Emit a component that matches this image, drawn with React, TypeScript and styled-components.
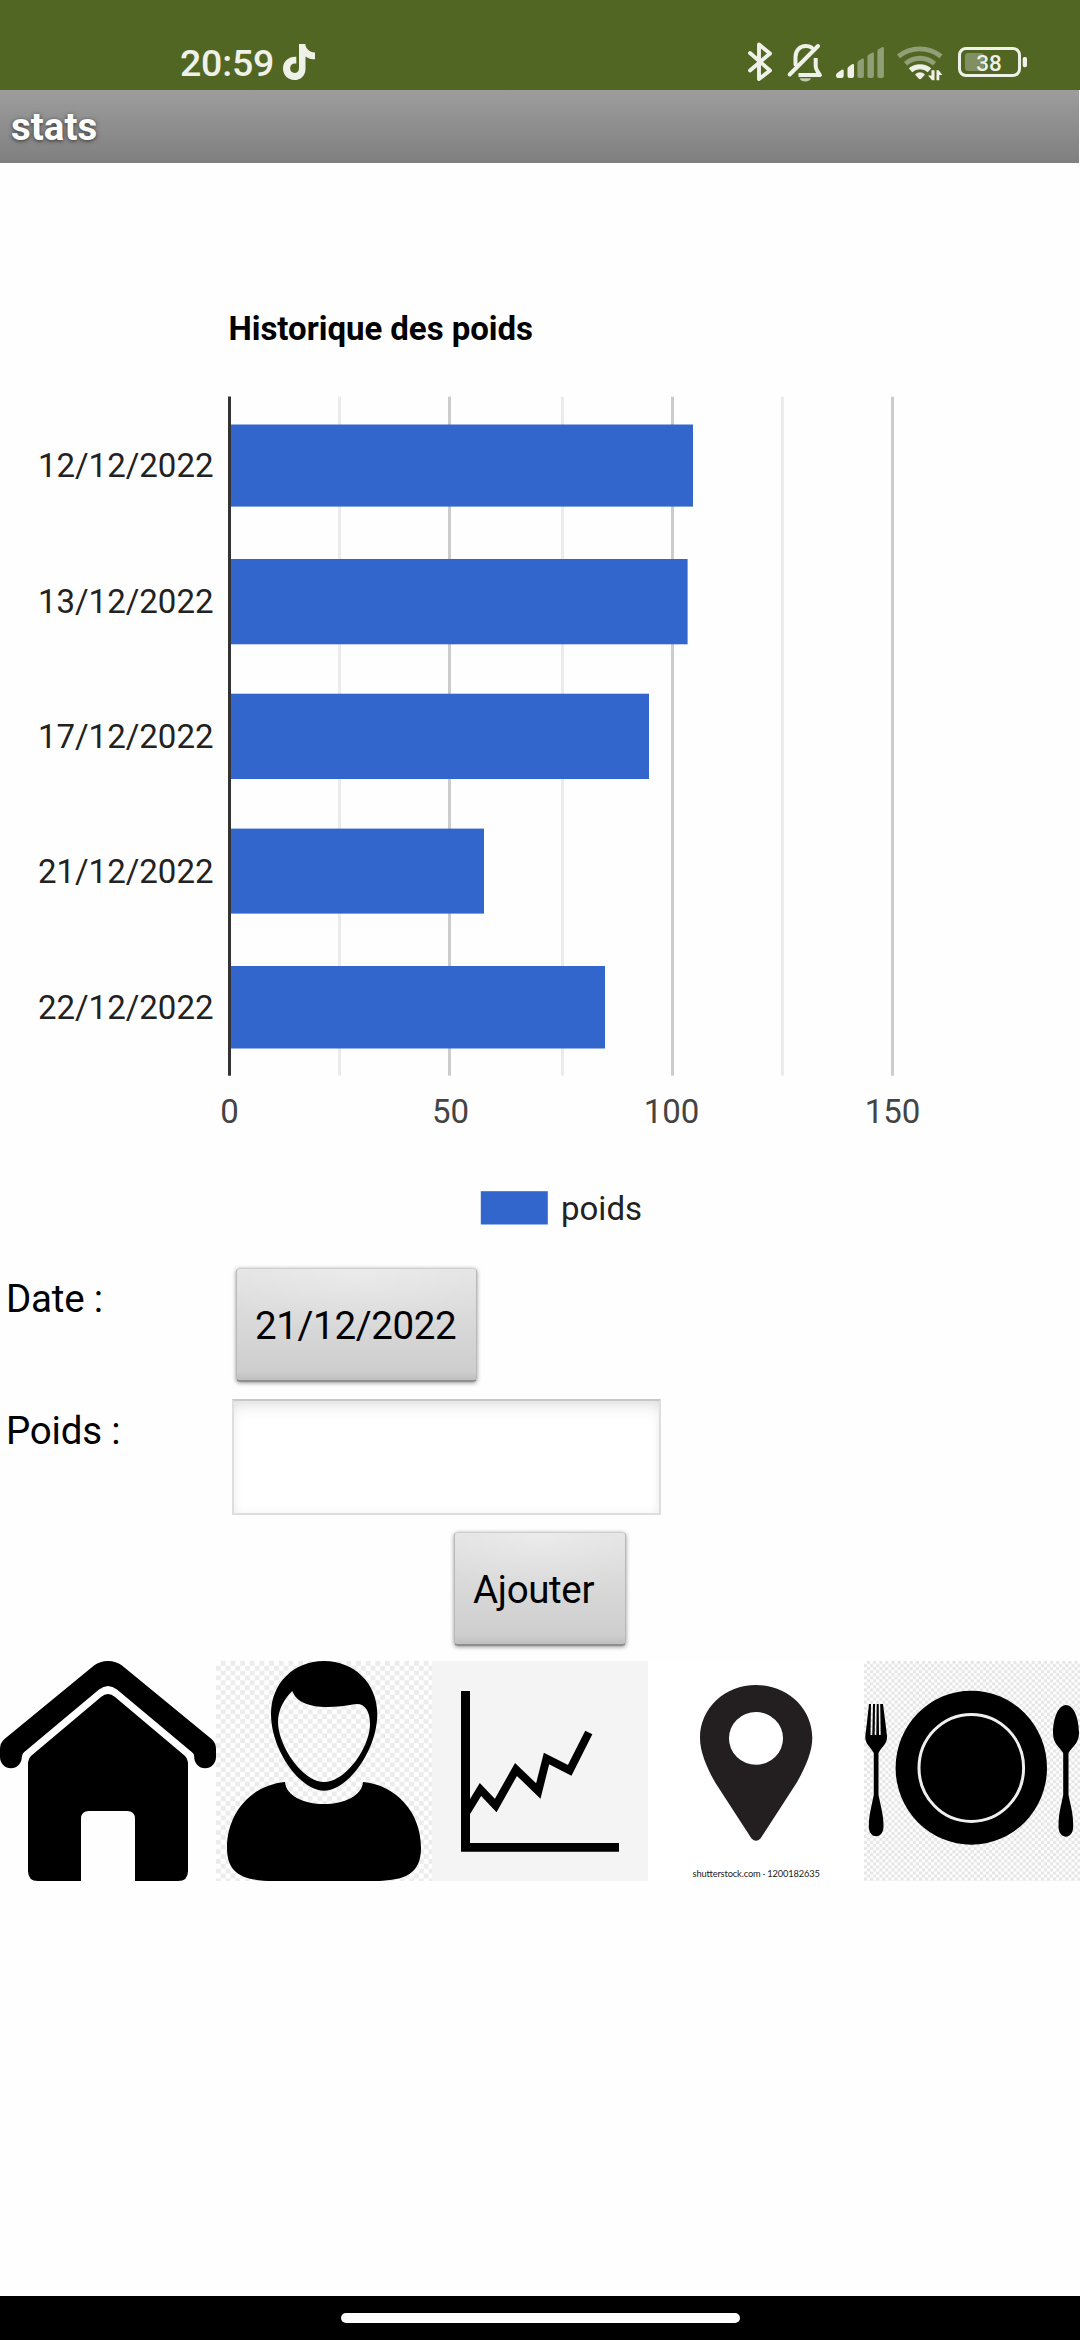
import React from "react";
import styled, { createGlobalStyle } from "styled-components";

const GlobalStyle = createGlobalStyle`
  * { box-sizing: border-box; }
  body { margin: 0; background: #fff; font-family: Roboto, "Open Sans", sans-serif; color: #000; }
  svg { display: block; flex: none; }
`;

const Screen = styled.div`
  width: 1080px;
  height: 2340px;
  display: flex;
  flex-direction: column;
  background: #fefefe;
  overflow: hidden;
`;

const StatusBar = styled.header`
  height: 90px;
  padding: 36px 51px 0 180px;
  display: flex;
  align-items: center;
  background: #526623;
  color: #eff1e8;
`;

const Clock = styled.span`
  width: 102px;
  font-size: 37.5px;
  font-weight: 500;
  line-height: 54px;
  letter-spacing: -0.2px;
  white-space: nowrap;
`;

const StatusIcons = styled.div`
  margin-left: auto;
  display: flex;
`;

const TitleBar = styled.h1`
  margin: 0;
  width: 1079px;
  height: 73px;
  padding-left: 11px;
  background: linear-gradient(#9d9d9d, #7f7f7f);
  color: #fff;
  font-size: 38.5px;
  font-weight: 700;
  line-height: 73px;
  text-shadow: 0 1px 4px rgba(0, 0, 0, 0.65);
`;

const ChartArea = styled.section`
  height: 1096px;
`;

const AxisText = styled.text`
  font-family: Roboto, sans-serif;
  font-size: 33px;
`;

const FormRow = styled.div<{ $indent?: number }>`
  height: 132px;
  display: flex;
  align-items: flex-start;
  padding-left: ${(p) => p.$indent ?? 6}px;
`;

const Label = styled.label<{ $width: number }>`
  width: ${(p) => p.$width}px;
  margin-top: 17px;
  font-size: 38.5px;
  line-height: 46px;
  letter-spacing: -0.2px;
`;

const Button = styled.button<{ $width: number }>`
  width: ${(p) => p.$width}px;
  height: 114px;
  margin: 9px 0 0;
  padding: 2px 0 0 18px;
  border: 1px solid;
  border-color: #cfcfcf #b9b9b9 #8e8e8e;
  border-bottom-width: 2px;
  border-radius: 4px;
  background: radial-gradient(ellipse 65% 60% at 50% 0, rgba(255, 255, 255, 0.28), transparent),
    linear-gradient(#e4e4e4, #cecece 92%, #bfbfbf);
  box-shadow: 0 1px 4px rgba(0, 0, 0, 0.42);
  color: #000;
  font: 400 38.5px/109px Roboto, sans-serif;
  letter-spacing: -0.35px;
  text-align: left;
  white-space: nowrap;
`;

const WeightInput = styled.input`
  width: 429px;
  height: 116px;
  margin: 8px 0 0;
  padding: 0 20px;
  border: 2px solid #dedede;
  border-top-color: #c8c8c8;
  background: #fff;
  box-shadow: inset 0 10px 16px -6px rgba(0, 0, 0, 0.12), inset 0 0 10px rgba(0, 0, 0, 0.04);
  font: 400 38.5px Roboto, sans-serif;
  outline: none;
`;

const NavBar = styled.nav`
  margin-top: 6px;
  display: grid;
  grid-template-columns: repeat(5, 216px);
  height: 220px;
`;

const GestureBar = styled.footer`
  height: 44px;
  margin-top: auto;
  display: flex;
  align-items: center;
  justify-content: center;
  background: #000;
`;

const GesturePill = styled.div`
  width: 399px;
  height: 10px;
  border-radius: 5px;
  background: #fff;
`;

const TikTokIcon = () => (
  <svg width="34" height="54" viewBox="282 36 34 54" fill="#eff1e8">
    <path d="M299 44h6.300c.5 4.600 3.600 8 9.700 8.600v6.700c-3.700 0-6.700-1-9.500-2.900v12.300c0 7-5 11.400-11.200 11.400-6.400 0-11.300-5-11.300-11.500 0-7.200 5.600-12.200 13.300-11.800v6.800c-3.800-.7-6.200 1.500-6.200 4.700 0 2.900 2 4.700 4.400 4.700 2.700 0 4.500-1.800 4.500-5z" />
  </svg>
);

const BluetoothIcon = () => (
  <svg width="36" height="54" viewBox="742 36 36 54" fill="none" stroke="#eff1e8" strokeWidth="3.900" strokeLinecap="round" strokeLinejoin="round">
    <path d="M750 53 770 70.500 759 79V44.500L770 53.500 750 70.500" />
  </svg>
);

const MutedBellIcon = () => (
  <svg width="52" height="54" viewBox="778 36 52 54" fill="none" stroke="#eff1e8" strokeWidth="4" strokeLinecap="round" strokeLinejoin="round">
    <path d="M795.500 64.500V57c0-6.500 4.300-11 10.300-11 2.200 0 4.200.5 5.900 1.700M789.700 74.500 818 46" />
    <path d="M815.700 58v8c0 2.500.5 3.500 1.800 5.300l2.400 3.700H798.500" strokeLinecap="butt" />
    <path d="M799.500 78.300h11.500c-1 2.200-3.200 3.100-5.700 3.100s-4.800-.9-5.800-3.100z" fill="#c3cab0" stroke="none" />
  </svg>
);

const SignalIcon = () => (
  <svg width="58" height="54" viewBox="830 36 58 54">
    <g fill="#eff1e8">
      <path d="M836 75.500q0-1.500 1.200-2.400l4.200-3.200q2.300-1 2.300 1V76q0 2-2 2H838q-2 0-2-2z" />
      <path d="M847.500 69q0-1.500 1.200-2.300l3.300-2.400q2-.8 2 1V76q0 2-2 2h-2.500q-2 0-2-2z" />
    </g>
    <g fill="#919f76">
      <path d="M857.400 63q0-1.500 1.200-2.300l3.300-2q2-.8 2 1V76q0 2-2 2h-2.500q-2 0-2-2z" />
      <path d="M867.400 57q0-1.500 1.200-2.300l3.300-2q2-.8 2 1V76q0 2-2 2h-2.500q-2 0-2-2z" />
      <path d="M877.400 51.500q0-1.500 1.200-2.300l3.300-2q2-.8 2 1V76q0 2-2 2h-2.500q-2 0-2-2z" />
    </g>
  </svg>
);

const WifiIcon = () => (
  <svg width="60" height="54" viewBox="888 36 60 54" fill="none">
    <path d="M898.500 56.300a34 34 0 0 1 42.500 0" stroke="#919f76" strokeWidth="4.800" />
    <path d="M905.500 63.700a22 22 0 0 1 29 0" stroke="#919f76" strokeWidth="4.800" />
    <path d="M910.500 70.300a14.500 14.500 0 0 1 19 0" stroke="#eff1e8" strokeWidth="5.200" />
    <path d="M915 74.500q5-4.500 10 0l-3.600 4q-1.400 1.300-2.800 0z" fill="#eff1e8" />
    <path d="M934.500 70.200V80.300H932l-4-4.800h3.500v-5.300zM936.500 80.300V70.200h2.200l3.600 4.800h-3v5.300z" fill="#eff1e8" />
  </svg>
);

const BatteryIcon = () => (
  <svg width="81" height="54" viewBox="948 36 81 54">
    <rect x="965" y="53" width="19" height="18" rx="3" fill="#828f60" />
    <rect x="959.500" y="48.500" width="60" height="27" rx="6.500" fill="none" stroke="#eff1e8" strokeWidth="3" />
    <rect x="1022.700" y="57" width="4.300" height="10.300" rx="1.800" fill="#eff1e8" />
    <text x="989" y="70.700" textAnchor="middle" fontFamily="Roboto, sans-serif" fontSize="22.500" fontWeight="500" fill="#eff1e8">38</text>
  </svg>
);

const weights = [
  { date: "12/12/2022", value: 105, top: 424.5, bottom: 506.6, right: 693, baseline: 477 },
  { date: "13/12/2022", value: 104, top: 559, bottom: 644.3, right: 687.6, baseline: 613 },
  { date: "17/12/2022", value: 95, top: 693.7, bottom: 779, right: 649, baseline: 748 },
  { date: "21/12/2022", value: 58, top: 828.6, bottom: 913.6, right: 484, baseline: 883 },
  { date: "22/12/2022", value: 85, top: 966, bottom: 1048.5, right: 605, baseline: 1019 },
];

const minorLines = [338, 561, 781];
const majorLines = [448, 671, 891];
const ticks = [
  { label: "0", x: 229.5 },
  { label: "50", x: 450.5 },
  { label: "100", x: 671.5 },
  { label: "150", x: 892.5 },
];

const WeightChart = () => (
  <svg width="1080" height="1096" viewBox="0 163 1080 1096">
    <AxisText x="228.500" y="340" fontWeight="700" textLength="304.500">Historique des poids</AxisText>
    {minorLines.map((x) => <rect key={x} x={x} y="396.700" width="3" height="679" fill="#ebebeb" />)}
    {majorLines.map((x) => <rect key={x} x={x} y="396.700" width="3" height="679" fill="#ccc" />)}
    {weights.map((w) => (
      <g key={w.date}>
        <rect x="230" y={w.top} width={w.right - 230} height={w.bottom - w.top} fill="#3366cc" />
        <AxisText x="213.500" y={w.baseline} textAnchor="end" fill="#222">{w.date}</AxisText>
      </g>
    ))}
    <rect x="228" y="396.500" width="3" height="679.200" fill="#333" />
    {ticks.map((t) => (
      <AxisText key={t.label} x={t.x} y="1122.600" textAnchor="middle" fill="#444">{t.label}</AxisText>
    ))}
    <rect x="480.800" y="1191.200" width="67" height="33.300" fill="#3366cc" />
    <AxisText x="561" y="1220" fill="#222">poids</AxisText>
  </svg>
);

const HomeTile = () => (
  <svg width="216" height="220" viewBox="0 0 216 220">
    <path d="M108 0Q116 0 122 4.500L211.500 78Q216 82 216 88V96A10.900 11.300 0 0 1 194.200 96V95Q194.200 93 192 91.200L117 28.500Q108 21.500 99 28.500L24 91.200Q21.800 93 21.800 96A10.900 11.300 0 0 1 0 96V88Q0 82 4.500 78L94 4.500Q100 0 108 0Z" />
    <path d="M101 36Q108 30 115 36L184.500 94.500Q188 98 188 103V210Q188 220 178 220H135V158Q135 150 127 150H89Q81 150 81 158V220H38Q28 220 28 210V103Q28 98 31.500 94.500Z" />
  </svg>
);

const ProfileTile = () => (
  <svg width="216" height="220" viewBox="0 0 216 220">
    <defs>
      <pattern id="profileChecks" width="9.660" height="9.660" patternUnits="userSpaceOnUse">
        <rect width="9.660" height="9.660" fill="#fff" />
        <path d="M4.830 0h4.830v4.830H4.830zM0 4.830h4.830v4.830H0z" fill="#ececec" />
      </pattern>
    </defs>
    <rect width="216" height="220" fill="url(#profileChecks)" />
    <path fillRule="evenodd" d="M108 0C138 0 161.300 22 161.300 53C161.300 89 132 129.700 108 129.700C84 129.700 55 89 55 53C55 22 78 0 108 0ZM76.300 30C69 37 62 48 62 61C62 84 86 121 108 121C130 121 154 86 154 63C154 50 149 43 141 43C136 43 128 46 112 46C91 46 80 40 76.300 30Z" />
    <path d="M69 121C70 135 88 143 108 143C128 143 146 135 147 121C180 124 205 151 205 187C205 212 190 220 158 220H58C26 220 11 212 11 187C11 151 36 124 69 121Z" />
  </svg>
);

const StatsTile = () => (
  <svg width="216" height="220" viewBox="0 0 216 220">
    <rect width="216" height="220" fill="#f4f4f4" />
    <path d="M29 30h9v152h149v8.700H29z" />
    <path d="M35 150.500 48.500 128.500 63.700 144.500 84 108.500 106.300 130 114.500 97.500 137.700 109.300 156.800 71.500" fill="none" stroke="#000" strokeWidth="8" strokeMiterlimit="10" />
  </svg>
);

const MapTile = () => (
  <svg width="216" height="220" viewBox="0 0 216 220">
    <rect width="216" height="220" fill="#fff" />
    <path fill="#231f20" fillRule="evenodd" d="M108 24C139 24 164.300 47 164.300 77C164.300 92 156 109 148.500 122L112.500 177.500Q108 182 103.500 177.500L67.500 122C60 109 52 92 52 77C52 47 77 24 108 24ZM108 51A27 26.300 0 1 0 108 103.700A27 26.300 0 1 0 108 51Z" />
    <text x="44.500" y="216" fontFamily="Lato, sans-serif" fontSize="9.300" textLength="127.500" fill="#222">shutterstock.com · 1200182635</text>
  </svg>
);

const MealTile = () => (
  <svg width="216" height="220" viewBox="0 0 216 220">
    <defs>
      <pattern id="mealChecks" width="6.100" height="6.100" patternUnits="userSpaceOnUse">
        <rect width="6.100" height="6.100" fill="#fff" />
        <path d="M3.050 0h3.050v3.050H3.050zM0 3.050h3.050v3.050H0z" fill="#e5e5e5" />
      </pattern>
    </defs>
    <rect width="216" height="220" fill="url(#mealChecks)" />
    <ellipse cx="107.300" cy="106.700" rx="75.700" ry="77" />
    <ellipse cx="107.300" cy="106.900" rx="52.300" ry="53.500" fill="none" stroke="#efefef" strokeWidth="3" />
    <path d="M5 43h2l-.5 31h1.800L9 43h2l-.3 31h1.600L12.700 43h2l.3 31h1.700L16.200 43h2.800l2.300 18L23 75c.5 8-5 10-8.500 17L14.500 134l3 14c1 5 2 10 2 17.500 0 13-14.700 13-14.700 0 0-7.500 1-12.500 2-17.500l3-14V92C6 85 .8 83 1.300 75L3 61z" />
    <path d="M202 44c8 0 13 14 13 28 0 10-6 13-10.500 20v42l3 14c1 5 1.700 10 1.700 17.500 0 13.500-14.700 13.500-14.700 0 0-7.500.7-12.500 1.700-17.500l3-14V92C194.500 85 189 82 189 72c0-14 5-28 13-28z" />
  </svg>
);

export default function App() {
  return (
    <Screen>
      <GlobalStyle />
      <StatusBar>
        <Clock>20:59</Clock>
        <TikTokIcon />
        <StatusIcons>
          <BluetoothIcon />
          <MutedBellIcon />
          <SignalIcon />
          <WifiIcon />
          <BatteryIcon />
        </StatusIcons>
      </StatusBar>
      <TitleBar>stats</TitleBar>
      <ChartArea>
        <WeightChart />
      </ChartArea>
      <FormRow>
        <Label $width={230}>Date :</Label>
        <Button $width={241}>21/12/2022</Button>
      </FormRow>
      <FormRow>
        <Label $width={226} htmlFor="poids">Poids :</Label>
        <WeightInput id="poids" type="text" />
      </FormRow>
      <FormRow $indent={454}>
        <Button $width={172}>Ajouter</Button>
      </FormRow>
      <NavBar>
        <HomeTile />
        <ProfileTile />
        <StatsTile />
        <MapTile />
        <MealTile />
      </NavBar>
      <GestureBar>
        <GesturePill />
      </GestureBar>
    </Screen>
  );
}
